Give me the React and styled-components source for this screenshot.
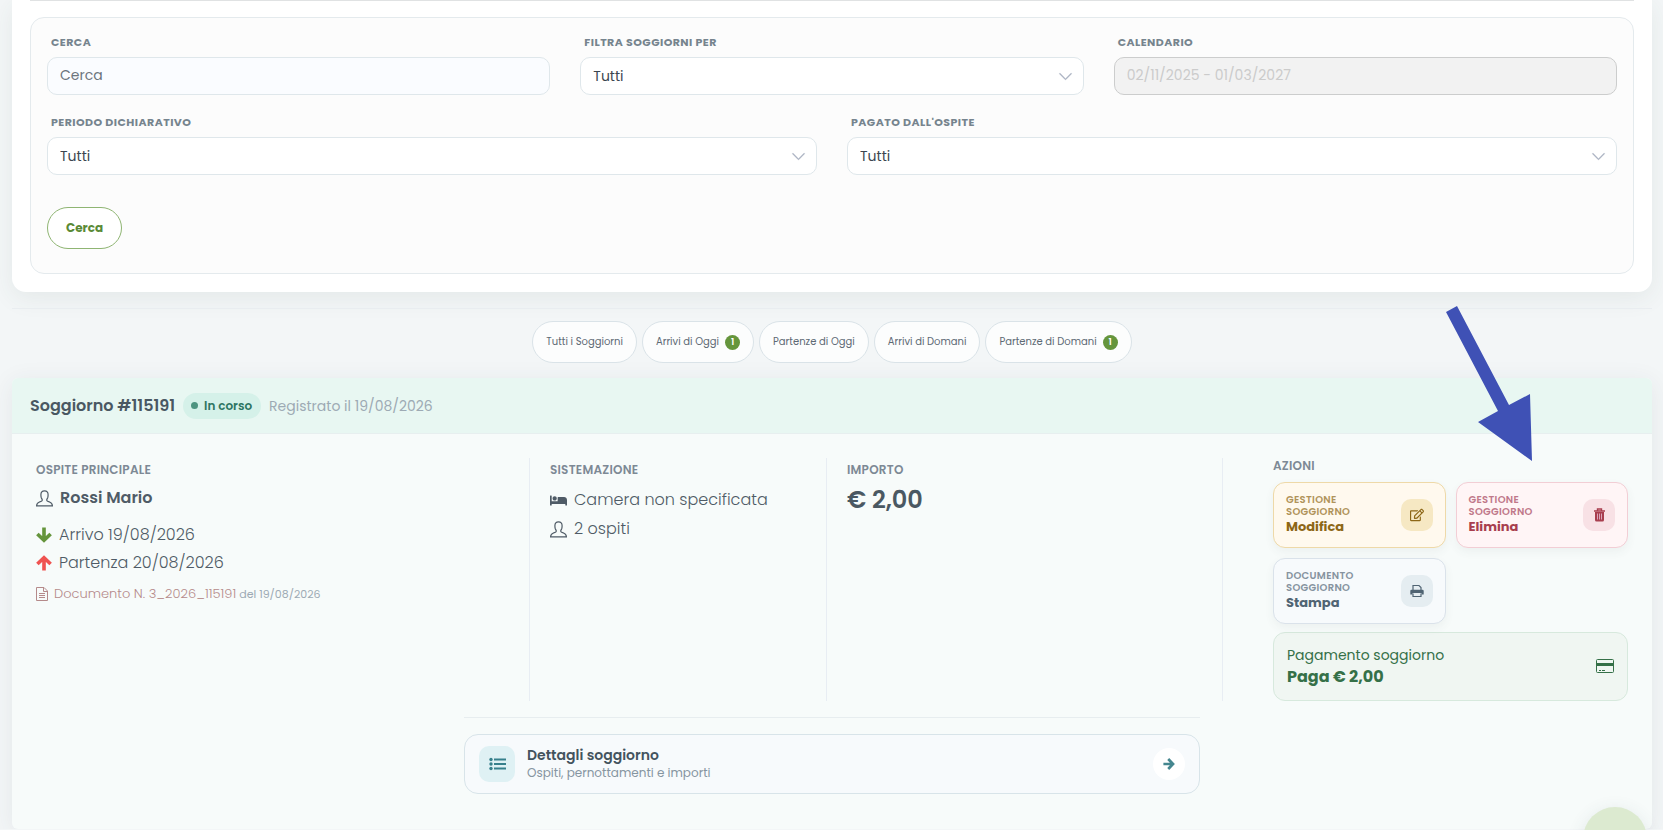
import styled, { createGlobalStyle } from "styled-components"
import { FaBed, FaRegEdit } from "react-icons/fa"
import { BsChevronDown } from "react-icons/bs"


const GlobalStyle = createGlobalStyle`
    *{
        box-sizing: border-box;
    }

    body{
        margin: 0;
        background: #f3f6f7;
        color: #4a5661;
        font-family: Poppins, Inter, sans-serif;
        font-size: 14px;
        line-height: 20px;
        overflow-x: hidden;
    }

    button, input, select{
        font-family: inherit;
    }
`

const Page = styled.main`
    padding: 0 11px 0 12px;
`

const FilterCard = styled.section`
    padding: 0 18px 18px;
    background: #fff;
    border-radius: 0 0 14px 14px;
    box-shadow: 0 6px 24px rgba(50, 80, 70, 0.08);
`

const TopLine = styled.hr`
    height: 1px;
    margin: 0 0 16px;
    border: 0;
    background: #e0e2e3;
`

const FilterPanel = styled.form`
    padding: 16px 16px 24px;
    background: #fcfcfc;
    border: 1px solid #e4eaed;
    border-radius: 14px;
`

const FieldRow = styled.div`
    display: grid;
    grid-template-columns: repeat(${({ $columns }) => $columns}, 1fr);
    gap: 30px;
    margin-bottom: 19px;
`

const Field = styled.div`
    display: flex;
    flex-direction: column;
    gap: 7px;

    label{
        padding-left: 4px;
        color: #76848e;
        font-size: 11px;
        font-weight: 700;
        letter-spacing: 0.04em;
        line-height: 16px;
        text-transform: uppercase;
    }
`

const TextInput = styled.input`
    width: 100%;
    height: 38px;
    padding: 0 12px 1px;
    border: 1px solid #dfe7eb;
    border-radius: 10px;
    background: #fafcff;
    color: #6c757d;
    font-size: 14px;

    &::placeholder{
        color: #6c757d;
    }

    &:disabled{
        border-color: #cccdcd;
        background: #f2f2f2;
        color: #cbcbcb;
    }
`

const SelectBox = styled.div`
    position: relative;

    select{
        width: 100%;
        height: 38px;
        padding: 0 12px 1px;
        appearance: none;
        border: 1px solid #dfe7eb;
        border-radius: 10px;
        background: #fff;
        color: #3b4650;
        font-size: 14px;
    }

    svg{
        position: absolute;
        top: 12px;
        right: 11px;
        color: #a9b1c0;
        stroke: currentColor;
        stroke-width: 0.4;
        pointer-events: none;
    }
`

const SearchButton = styled.button`
    display: block;
    height: 42px;
    margin-top: 32px;
    padding: 0 18px;
    border: 1px solid #8fb573;
    border-radius: 21px;
    background: #fff;
    color: #5a8a36;
    font-size: 12px;
    font-weight: 700;
`

const QuickFilters = styled.nav`
    display: flex;
    justify-content: center;
    gap: 5px;
    margin-top: 16px;
    padding: 12px 0 15px;
    border-top: 1px solid #e9edf0;
`

const QuickButton = styled.button`
    display: flex;
    align-items: center;
    gap: 6px;
    height: 42px;
    padding: 0 13px;
    border: 1px solid #dae3e8;
    border-radius: 21px;
    background: #fcfdfd;
    color: #5d6974;
    font-size: 10px;
`

const Count = styled.span`
    width: 15px;
    height: 15px;
    border-radius: 50%;
    background: #65953c;
    color: #fff;
    font-size: 9px;
    font-weight: 600;
    line-height: 15px;
`

const StayCard = styled.article`
    background: #f7fbfa;
    border-radius: 6px;
    box-shadow: 0 4px 24px rgba(50, 70, 80, 0.08);
`

const StayHeader = styled.header`
    display: flex;
    align-items: center;
    gap: 8px;
    height: 56px;
    padding: 0 18px;
    background: #e8f7f2;
    border-bottom: 1px solid #e7efef;
    border-radius: 6px 6px 0 0;

    h2{
        margin: 0;
        color: #4a5862;
        font-size: 16px;
        font-weight: 600;
    }

    time{
        color: #9daab4;
    }
`

const Status = styled.span`
    display: flex;
    align-items: center;
    gap: 6px;
    height: 26px;
    padding: 0 9px 0 8px;
    border-radius: 13px;
    background: #d5f1e9;
    color: #2d7562;
    font-size: 12px;
    font-weight: 600;

    &::before{
        content: "";
        width: 7px;
        height: 7px;
        border-radius: 50%;
        background: #4d9480;
    }
`

const StayBody = styled.div`
    display: grid;
    grid-template-columns: 493fr 297fr 396fr 406fr;
    padding: 24px 24px 0;
`

const Column = styled.section`
    padding: 4px 20px 0;
    border-left: 1px solid #e8edf3;

    &:first-child{
        padding-left: 0;
        border-left: 0;
    }

    &:last-child{
        padding: 0 0 0 50px;
    }
`

const Caption = styled.h3`
    margin: 0;
    color: #7d8995;
    font-size: 12px;
    font-weight: 600;
    letter-spacing: 0.02em;
    line-height: 16px;
    text-transform: uppercase;
`

const Line = styled.div`
    display: flex;
    align-items: center;
    gap: 7px;
    margin-top: ${({ $top }) => $top || 0}px;
    color: #4f5b66;
    font-size: 16px;
    font-weight: ${({ $bold }) => $bold ? 600 : 300};
    line-height: 28px;

    svg{
        flex: none;
    }
`

const DocumentLine = styled.div`
    display: flex;
    align-items: center;
    margin-top: 7px;

    a{
        display: flex;
        align-items: center;
        gap: 6px;
        color: #b58a8a;
        font-size: 13px;
        font-weight: 300;
        text-decoration: none;
    }

    small{
        margin-left: 3px;
        color: #9daab4;
        font-size: 11px;
    }
`

const Amount = styled.strong`
    display: block;
    margin-top: 6px;
    color: #4a5862;
    font-size: 24px;
    font-weight: 600;
    line-height: 32px;
`

const ActionGrid = styled.div`
    display: grid;
    grid-template-columns: 1fr 1fr;
    gap: 10px;
    margin-top: 8px;
`

const tones = {
    edit: { bg: "#fff9ee", border: "#eed9a8", icon: "#f6e8c3", label: "#b0935a", text: "#8d6716" },
    remove: { bg: "#fff5f6", border: "#f2ced5", icon: "#f8e1e5", label: "#c0788a", text: "#a83e4e" },
    print: { bg: "#f7fafc", border: "#dae2ea", icon: "#e5edf1", label: "#86939f", text: "#506473" },
}

const ActionButton = styled.button`
    display: flex;
    align-items: center;
    justify-content: space-between;
    height: 66px;
    padding: 0 12px;
    border: 1px solid ${({ $tone }) => tones[$tone].border};
    border-radius: 12px;
    background: ${({ $tone }) => tones[$tone].bg};
    box-shadow: 0 4px 10px rgba(60, 80, 90, 0.06);
    color: ${({ $tone }) => tones[$tone].text};
    text-align: left;

    small{
        display: block;
        width: 80px;
        color: ${({ $tone }) => tones[$tone].label};
        font-size: 10px;
        font-weight: 600;
        letter-spacing: 0.03em;
        line-height: 12px;
        text-transform: uppercase;
    }

    strong{
        display: block;
        font-size: 13px;
        font-weight: 700;
        line-height: 18px;
    }
`

const ActionIcon = styled.span`
    display: grid;
    place-items: center;
    width: 32px;
    height: 32px;
    border-radius: 10px;
    background: ${({ $tone }) => tones[$tone].icon};
`

const PayButton = styled.button`
    display: flex;
    align-items: center;
    justify-content: space-between;
    width: 100%;
    height: 69px;
    margin-top: 8px;
    padding: 0 13px 2px;
    border: 1px solid #d7e9dd;
    border-radius: 12px;
    background: #f0f6f2;
    color: #357048;
    font-size: 14px;
    line-height: 22px;
    text-align: left;

    strong{
        display: block;
        font-size: 16px;
        font-weight: 700;
    }
`

const DetailsArea = styled.div`
    width: 45%;
    max-width: 736px;
    min-width: 320px;
    margin: 16px auto 0;
    padding: 16px 0 35px;
    border-top: 1px solid #e7edef;
`

const DetailsButton = styled.button`
    display: flex;
    align-items: center;
    gap: 12px;
    width: 100%;
    height: 60px;
    padding: 0 14px;
    border: 1px solid #d8e4e9;
    border-radius: 14px;
    background: #f7fafc;
    color: #8695a1;
    font-size: 12px;
    line-height: 18px;
    text-align: left;

    strong{
        display: block;
        color: #43535e;
        font-size: 14px;
        font-weight: 600;
    }
`

const ListBadge = styled.span`
    display: grid;
    place-items: center;
    width: 36px;
    height: 36px;
    border-radius: 10px;
    background: #dff1f4;
    color: #37808c;
`

const GoBadge = styled.span`
    display: grid;
    place-items: center;
    width: 32px;
    height: 32px;
    margin-left: auto;
    border-radius: 50%;
    background: #fff;
    color: #45868f;
`

const FloatingButton = styled.button`
    position: fixed;
    right: 16px;
    bottom: -41px;
    width: 64px;
    height: 64px;
    border: 0;
    border-radius: 50%;
    background: #dcead0;
    box-shadow: 0 4px 18px rgba(60, 80, 90, 0.12);
`

const Pointer = styled.svg`
    position: absolute;
    top: 306px;
    right: 131px;
    pointer-events: none;
`

const UserIcon = () => (
    <svg width="17" height="17" viewBox="0 0 17 17" fill="none" stroke="currentColor" strokeWidth="1.2">
        <path d="M6.300 10.200C6.300 9 5.700 8.700 5.300 7.700 5 6.800 4.900 6 4.900 4.800 4.900 2 6.200.9 8.500.9s3.600 1.100 3.600 3.900c0 1.200-.1 2-.4 2.900-.4 1-1 1.300-1 2.500 0 .9 1 1.200 2.800 1.800 1.800.7 2.900 1.700 2.900 3.800H.6c0-2.100 1.100-3.100 2.900-3.800 1.800-.6 2.800-.9 2.800-1.800z" />
    </svg>
)

const arrowAngles = { down: 0, up: 180, right: -90 }

const ArrowIcon = ({ size, color, direction }) => (
    <svg width={size} height={size} viewBox="0 0 15 15" fill="none" stroke={color || "currentColor"} strokeWidth="3.4">
        <path d="M7.500 .5V11.500M1.300 6.500L7.500 12.500L13.700 6.500" transform={`rotate(${arrowAngles[direction]} 7.5 7.5)`} />
    </svg>
)

const FileIcon = () => (
    <svg width="12" height="14" viewBox="0 0 12 14" fill="none" stroke="currentColor">
        <path d="M.5.5h7.500l3.500 3.500v9.500H.5zM7.500.5v4h4M3 6.500h6M3 8.500h6M3 10.500h6" />
    </svg>
)

const TrashIcon = () => (
    <svg width="13" height="14" viewBox="0 0 13 14">
        <path d="M4.500 2.500V1h4v1.500M1 3h11" fill="none" stroke="currentColor" strokeWidth="1.400" />
        <path d="M2 4h9v8q0 1.500-1.500 1.500h-6Q2 13.500 2 12z" fill="currentColor" />
        <path d="M4.500 5.500v6M6.500 5.500v6M8.500 5.500v6" stroke="#d9a5bb" />
    </svg>
)

const PrintIcon = () => (
    <svg width="14" height="14" viewBox="0 0 14 14">
        <path d="M3 6V1.500h6L11 3.500V6M3 9.500v3h8v-3" fill="none" stroke="currentColor" strokeWidth="1.200" />
        <path d="M1.500 5.800h11q1.200 0 1.200 1.200v3.500h-2.200V9h-9v1.500H.3V7q0-1.200 1.200-1.200z" fill="currentColor" />
    </svg>
)

const ListIcon = () => (
    <svg width="17" height="14" viewBox="0 0 17 14" fill="currentColor">
        <circle cx="2" cy="2.500" r="1.700" />
        <circle cx="2" cy="7" r="1.700" />
        <circle cx="2" cy="11.500" r="1.700" />
        <path d="M5 1.500h12v2H5zM5 6h12v2H5zM5 10.500h12v2H5z" />
    </svg>
)

const CardIcon = () => (
    <svg width="18" height="14" viewBox="0 0 18 14">
        <rect x=".5" y=".5" width="17" height="13" rx="1" fill="none" stroke="currentColor" />
        <path d="M1 4h16v3H1zM3 11h2v1H3zM6 11h3v1H6z" fill="currentColor" />
    </svg>
)

const SelectField = ({ id, label }) => (
    <Field>
        <label htmlFor={id}>{label}</label>
        <SelectBox>
            <select id={id}>
                <option>Tutti</option>
            </select>
            <BsChevronDown size={15} />
        </SelectBox>
    </Field>
)

const Action = ({ tone, label, title, icon }) => (
    <ActionButton type="button" $tone={tone}>
        <span>
            <small>{label}</small>
            <strong>{title}</strong>
        </span>
        <ActionIcon $tone={tone}>{icon}</ActionIcon>
    </ActionButton>
)

const quickFilters = [
    { text: "Tutti i Soggiorni" },
    { text: "Arrivi di Oggi", count: 1 },
    { text: "Partenze di Oggi" },
    { text: "Arrivi di Domani" },
    { text: "Partenze di Domani", count: 1 },
]

const App = () => {
    return (
        <>
            <GlobalStyle />
            <Page>
                <FilterCard>
                    <TopLine />
                    <FilterPanel onSubmit={(e) => e.preventDefault()}>
                        <FieldRow $columns={3}>
                            <Field>
                                <label htmlFor="cerca">Cerca</label>
                                <TextInput id="cerca" placeholder="Cerca" />
                            </Field>
                            <SelectField id="filtra" label="Filtra soggiorni per" />
                            <Field>
                                <label htmlFor="calendario">Calendario</label>
                                <TextInput id="calendario" defaultValue="02/11/2025 - 01/03/2027" disabled />
                            </Field>
                        </FieldRow>
                        <FieldRow $columns={2}>
                            <SelectField id="periodo" label="Periodo dichiarativo" />
                            <SelectField id="pagato" label="Pagato dall'ospite" />
                        </FieldRow>
                        <SearchButton type="submit">Cerca</SearchButton>
                    </FilterPanel>
                </FilterCard>

                <QuickFilters>
                    {quickFilters.map(({ text, count }) => (
                        <QuickButton type="button" key={text}>
                            {text}
                            {count && <Count>{count}</Count>}
                        </QuickButton>
                    ))}
                </QuickFilters>

                <StayCard>
                    <StayHeader>
                        <h2>Soggiorno #115191</h2>
                        <Status>In corso</Status>
                        <time>Registrato il 19/08/2026</time>
                    </StayHeader>
                    <StayBody>
                        <Column>
                            <Caption>Ospite principale</Caption>
                            <Line $bold $top={6}><UserIcon />Rossi Mario</Line>
                            <Line $top={9}><ArrowIcon size={16} color="#65953c" direction="down" />Arrivo 19/08/2026</Line>
                            <Line><ArrowIcon size={16} color="#ef5350" direction="up" />Partenza 20/08/2026</Line>
                            <DocumentLine>
                                <a href="#"><FileIcon />Documento N. 3_2026_115191</a>
                                <small>del 19/08/2026</small>
                            </DocumentLine>
                        </Column>
                        <Column>
                            <Caption>Sistemazione</Caption>
                            <Line $top={8}><FaBed size={17} />Camera non specificata</Line>
                            <Line $top={1}><UserIcon />2 ospiti</Line>
                        </Column>
                        <Column>
                            <Caption>Importo</Caption>
                            <Amount>€ 2,00</Amount>
                        </Column>
                        <Column>
                            <Caption>Azioni</Caption>
                            <ActionGrid>
                                <Action tone="edit" label="Gestione soggiorno" title="Modifica" icon={<FaRegEdit size={14} />} />
                                <Action tone="remove" label="Gestione soggiorno" title="Elimina" icon={<TrashIcon />} />
                                <Action tone="print" label="Documento soggiorno" title="Stampa" icon={<PrintIcon />} />
                            </ActionGrid>
                            <PayButton type="button">
                                <span>
                                    Pagamento soggiorno
                                    <strong>Paga € 2,00</strong>
                                </span>
                                <CardIcon />
                            </PayButton>
                        </Column>
                    </StayBody>
                    <DetailsArea>
                        <DetailsButton type="button">
                            <ListBadge><ListIcon /></ListBadge>
                            <span>
                                <strong>Dettagli soggiorno</strong>
                                Ospiti, pernottamenti e importi
                            </span>
                            <GoBadge><ArrowIcon size={12} direction="right" /></GoBadge>
                        </DetailsButton>
                    </DetailsArea>
                </StayCard>
            </Page>

            <FloatingButton type="button" aria-label="Aiuto" />
            <Pointer width="86" height="156" viewBox="0 0 86 156">
                <path d="M0 6L11 0L63 99L84 88L86 155L32 116L52 105Z" fill="#3f51b5" />
            </Pointer>
        </>
    )
}

export default App
